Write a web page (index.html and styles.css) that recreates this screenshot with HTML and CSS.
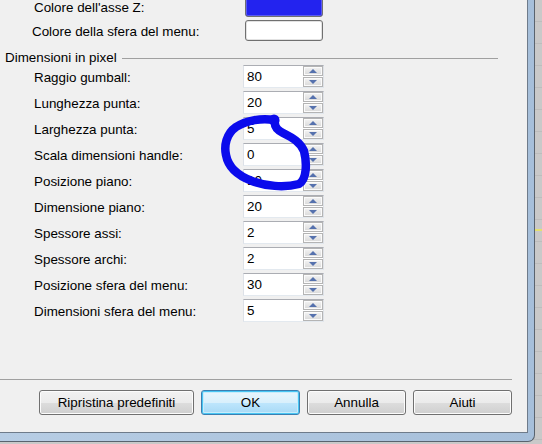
FILE: index.html
```html
<!DOCTYPE html>
<html>
<head>
<meta charset="utf-8">
<link rel="stylesheet" href="styles.css">
</head>
<body>
<div class="desk">
  <div class="window">
    <div class="client">
      <div class="colors">
        <div class="crow"><span class="lbl">Colore dell'asse Z:</span><span class="swatch blue"></span></div>
        <div class="crow"><span class="lbl lbl-shift">Colore della sfera del menu:</span><span class="swatch white"></span></div>
      </div>
      <div class="group"><span class="gtitle">Dimensioni in pixel</span><span class="gline"></span></div>
      <div class="fields">
        <div class="frow"><span class="lbl">Raggio gumball:</span><span class="spin"><span class="val">80</span><span class="arrows"><span class="ab up"></span><span class="ab down"></span></span></span></div>
        <div class="frow"><span class="lbl">Lunghezza punta:</span><span class="spin"><span class="val">20</span><span class="arrows"><span class="ab up"></span><span class="ab down"></span></span></span></div>
        <div class="frow"><span class="lbl">Larghezza punta:</span><span class="spin"><span class="val">5</span><span class="arrows"><span class="ab up"></span><span class="ab down"></span></span></span></div>
        <div class="frow"><span class="lbl">Scala dimensioni handle:</span><span class="spin"><span class="val">0</span><span class="arrows"><span class="ab up"></span><span class="ab down"></span></span></span></div>
        <div class="frow"><span class="lbl">Posizione piano:</span><span class="spin"><span class="val">10</span><span class="arrows"><span class="ab up"></span><span class="ab down"></span></span></span></div>
        <div class="frow"><span class="lbl">Dimensione piano:</span><span class="spin"><span class="val">20</span><span class="arrows"><span class="ab up"></span><span class="ab down"></span></span></span></div>
        <div class="frow"><span class="lbl">Spessore assi:</span><span class="spin"><span class="val">2</span><span class="arrows"><span class="ab up"></span><span class="ab down"></span></span></span></div>
        <div class="frow"><span class="lbl">Spessore archi:</span><span class="spin"><span class="val">2</span><span class="arrows"><span class="ab up"></span><span class="ab down"></span></span></span></div>
        <div class="frow"><span class="lbl">Posizione sfera del menu:</span><span class="spin"><span class="val">30</span><span class="arrows"><span class="ab up"></span><span class="ab down"></span></span></span></div>
        <div class="frow"><span class="lbl">Dimensioni sfera del menu:</span><span class="spin"><span class="val">5</span><span class="arrows"><span class="ab up"></span><span class="ab down"></span></span></span></div>
      </div>
      <div class="sep"></div>
      <div class="buttons">
        <button class="btn wide">Ripristina predefiniti</button>
        <button class="btn default">OK</button>
        <button class="btn">Annulla</button>
        <button class="btn">Aiuti</button>
      </div>
    </div>
  </div>
  <div class="glint"></div>
</div>
<svg class="annot" width="542" height="444" viewBox="0 0 542 444">
  <path d="M274 120 C262 118 247 120 236 127 C226 134 224 146 226 155 C228 166 236 175 252 181 C265 186 284 188 299 184 C307 179 307 163 304 151 C300 142 293 138 283 133 C277 130 274 126 275 121" fill="none" stroke="#0b0bec" stroke-width="8.5" stroke-linecap="round" stroke-linejoin="round"/>
  <circle cx="274" cy="120" r="5.5" fill="#0b0bec"/>
</svg>
</body>
</html>
```
FILE: styles.css
```css
html, body {
  margin: 0;
  padding: 0;
}
body {
  width: 542px;
  height: 444px;
  overflow: hidden;
  position: relative;
  font-family: "Liberation Sans", Arial, sans-serif;
  font-size: 13.4px;
  color: #000;
}
.desk {
  width: 542px;
  height: 444px;
  background-color: #c9c9c9;
  background-image: repeating-linear-gradient(to bottom, transparent 0, transparent 21px, #bdbdbd 21px, #bdbdbd 22px);
  position: relative;
}
.glint {
  position: absolute;
  left: 535px;
  top: 229px;
  width: 7px;
  height: 2px;
  background: #e4e070;
}
.window {
  padding: 0 6px 8px 0;
  box-sizing: border-box;
  width: 535px;
  height: 442px;
  background: linear-gradient(to right, #b7cde4, #a6bfda);
  border-right: 1px solid #59636e;
  border-bottom: 1px solid #59636e;
  border-bottom-right-radius: 7px;
}
.client {
  width: 528px;
  height: 433px;
  box-sizing: border-box;
  background: #f0f0f0;
  border-right: 1px solid #6e7b8a;
  border-bottom: 1px solid #6e7b8a;
  display: flex;
  flex-direction: column;
}
.colors {
  margin-top: -4px;
  display: flex;
  flex-direction: column;
  gap: 3px;
}
.crow, .frow {
  display: flex;
  align-items: center;
}
.crow { height: 21px; }
.lbl {
  box-sizing: border-box;
  padding-left: 34px;
  padding-top: 1px;
  width: 245px;
  white-space: nowrap;
}
.frow .lbl { width: 243px; }
.lbl-shift { padding-left: 32px; }
.swatch {
  width: 78px;
  height: 21px;
  box-sizing: border-box;
  border: 1px solid #707070;
  border-radius: 3px;
}
.swatch.blue {
  background: #2323ef;
  box-shadow: inset 0 0 0 1px #5a5af0;
}
.swatch.white {
  background: #fff;
  box-shadow: inset 0 0 0 1px #e2e2e2;
}
.group {
  margin-top: 9px;
  height: 15px;
  display: flex;
  align-items: center;
}
.gtitle {
  padding-left: 5px;
  white-space: nowrap;
  line-height: 15px;
}
.gline {
  flex: 1;
  height: 0;
  border-top: 1px solid #a0a0a0;
  margin: 1px 29px 0 5px;
}
.fields {
  display: flex;
  flex-direction: column;
  gap: 3px;
}
.frow { height: 23px; }
.spin {
  width: 81px;
  height: 23px;
  box-sizing: border-box;
  border: 1px solid #dde1e7;
  border-top-color: #abadb3;
  border-bottom-color: #e3e9ef;
  background: #fff;
  display: flex;
}
.val {
  flex: 1;
  padding-left: 3px;
  line-height: 21px;
}
.arrows {
  width: 20px;
  display: flex;
  flex-direction: column;
  gap: 1px;
}
.ab {
  height: 10px;
  box-sizing: border-box;
  border: 1px solid #b4b4b4;
  background: linear-gradient(to bottom, #f4f4f4, #e6e6e6 50%, #d8d8d8);
  box-shadow: inset 0 0 0 1px #fbfbfb;
  display: flex;
  align-items: center;
  justify-content: center;
}
.ab::after {
  content: "";
  width: 0;
  height: 0;
  border-left: 4px solid transparent;
  border-right: 4px solid transparent;
}
.ab.up::after { border-bottom: 4px solid #5571ad; }
.ab.down::after { border-top: 4px solid #5571ad; }
.sep {
  margin-top: auto;
  width: 512px;
  height: 0;
  border-top: 1px solid #a0a0a0;
}
.buttons {
  display: flex;
  gap: 7px;
  padding-left: 39px;
  margin-top: 10px;
  margin-bottom: 17px;
}
.btn {
  width: 99px;
  height: 25px;
  box-sizing: border-box;
  font-family: "Liberation Sans", Arial, sans-serif;
  font-size: 13.4px;
  color: #000;
  padding: 0;
  border: 1px solid #707070;
  border-radius: 3px;
  background: linear-gradient(to bottom, #f2f2f2 0%, #ebebeb 50%, #dddddd 51%, #cfcfcf 100%);
  box-shadow: inset 0 0 0 1px #fcfcfc;
}
.btn.wide { width: 155px; }
.btn.default {
  border-color: #3c7fb1;
  background: linear-gradient(to bottom, #eaf6fd 0%, #d9f0fc 50%, #bee6fd 51%, #a7d9f5 100%);
  box-shadow: inset 0 0 0 1px #48c6f4, inset 0 0 0 2px #c8ecfb;
}
.annot {
  position: absolute;
  left: 0;
  top: 0;
  pointer-events: none;
}
```
